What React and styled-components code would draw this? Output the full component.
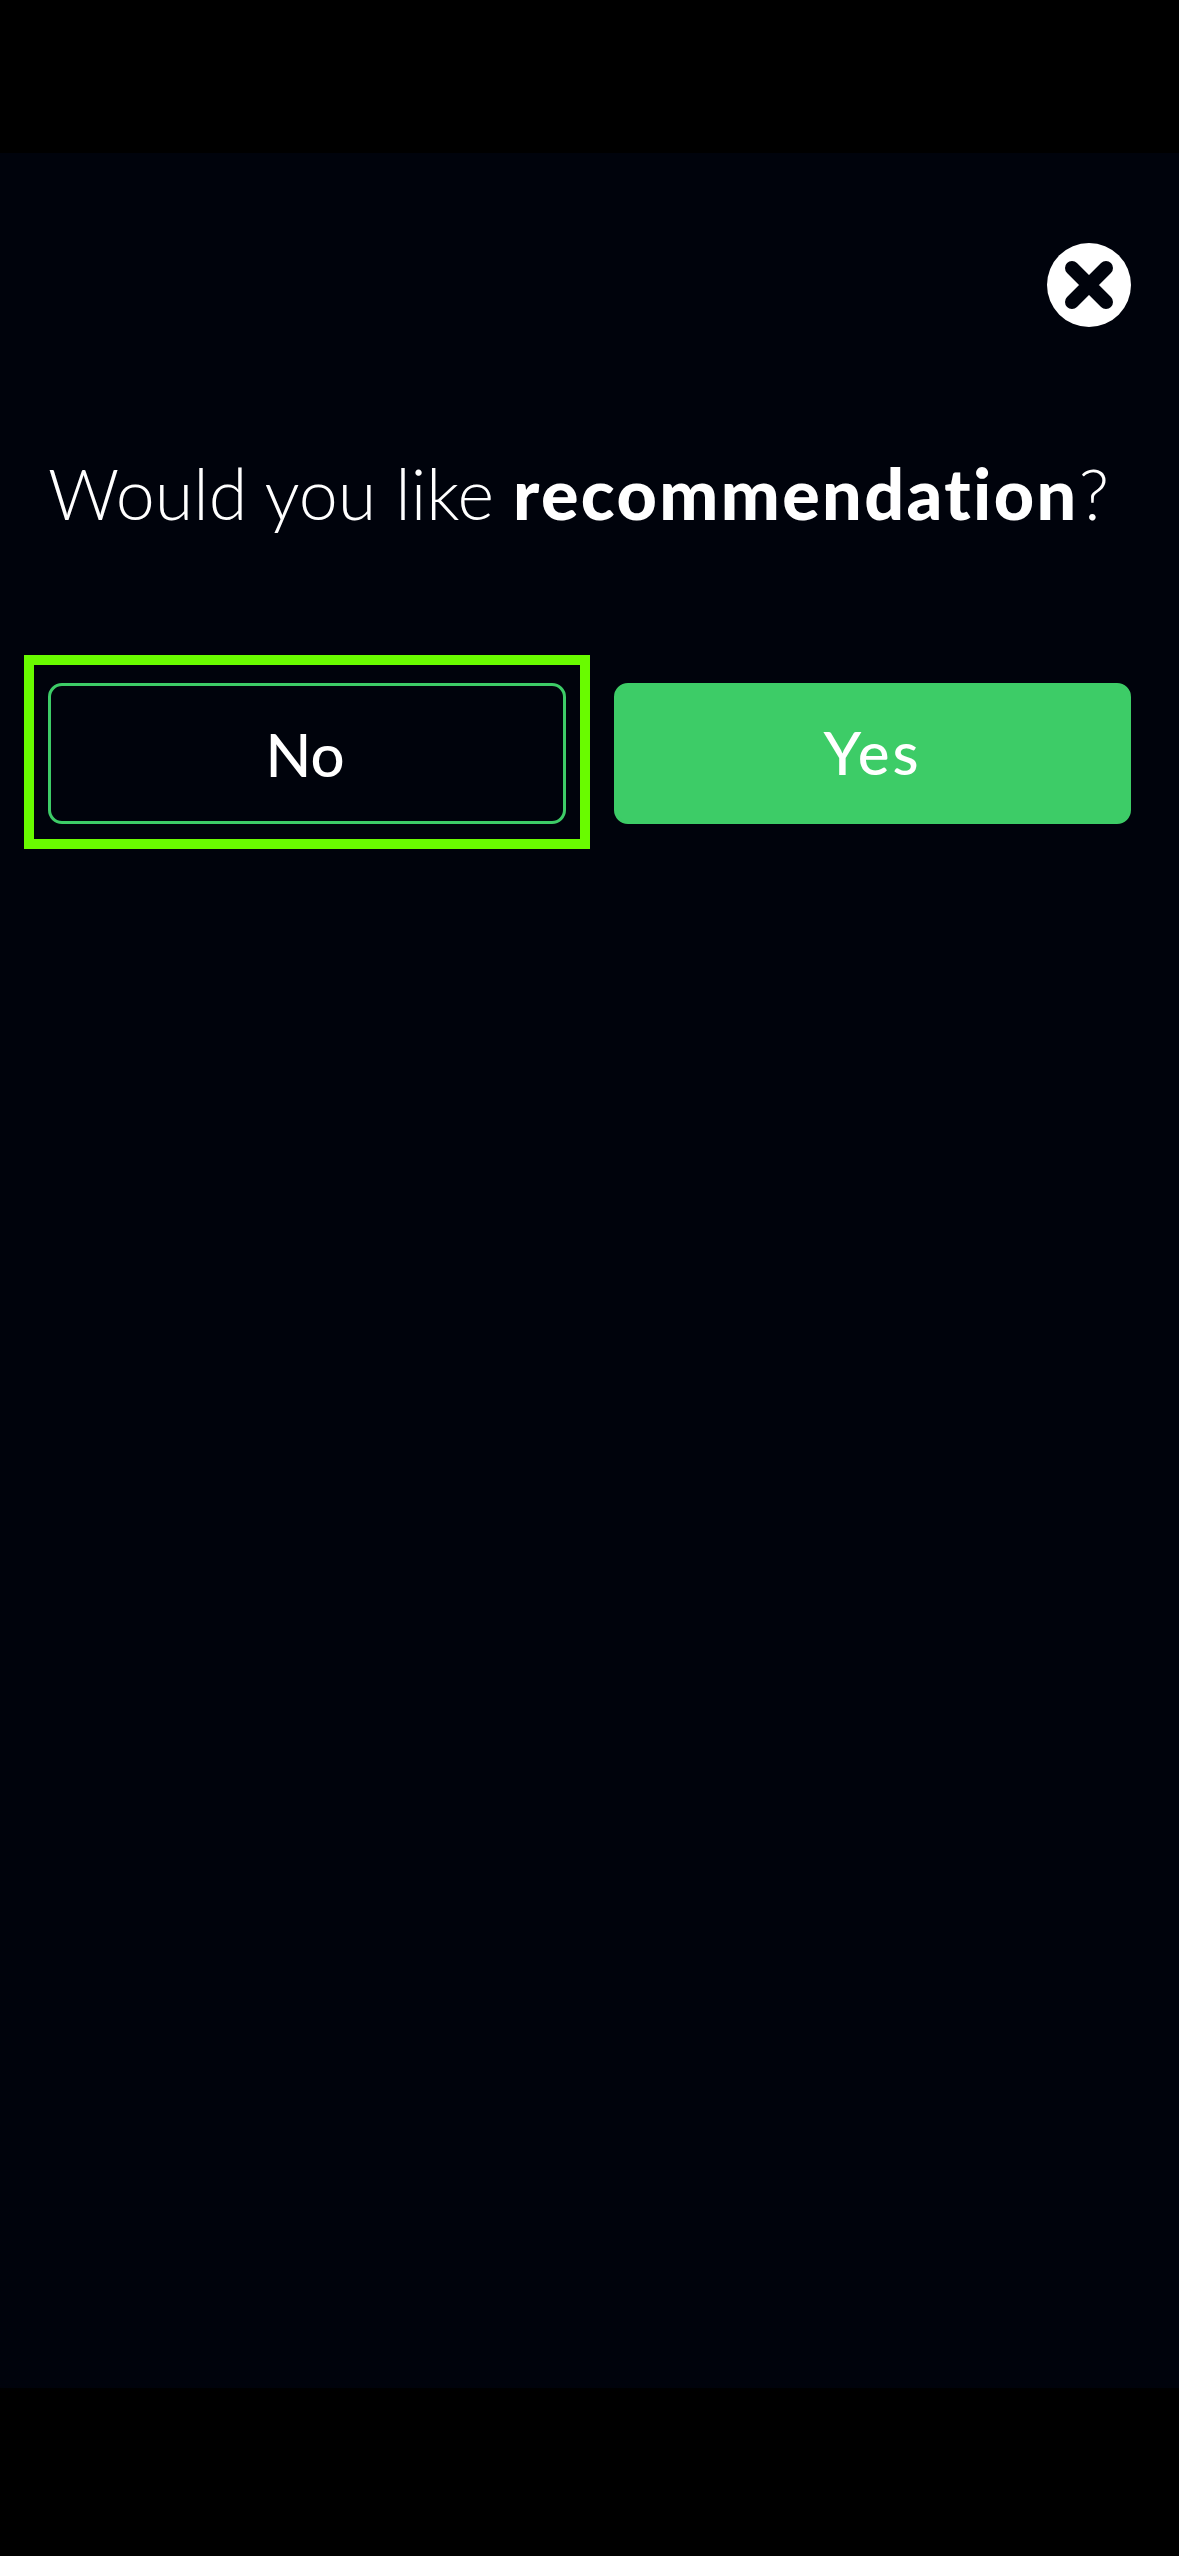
import React from "react"
import styled, { createGlobalStyle } from "styled-components"

const GlobalStyle = createGlobalStyle`
  html, body {
    margin: 0;
    padding: 0;
    background: #000;
  }
`

const Page = styled.div`
  width: 1179px;
  height: 2556px;
  display: flex;
  flex-direction: column;
  font-family: "Lato", "Liberation Sans", sans-serif;
  color: #fff;
  background: #000;
`

const Band = styled.div`
  flex: none;
  height: ${(p) => p.$height}px;
  background: #000;
`

const Sheet = styled.main`
  flex: 1;
  box-sizing: border-box;
  padding: 90px 48px 0;
  background: #00030c;
`

const CloseRow = styled.div`
  display: flex;
  justify-content: flex-end;
`

const CloseButton = styled.button`
  width: 84px;
  height: 84px;
  padding: 0;
  border: 0;
  background: none;
  display: block;
`

const Question = styled.h1`
  margin: 126px 0 0;
  height: 80px;
  font-size: 70px;
  line-height: 80px;
  font-weight: 300;
  white-space: nowrap;

  strong {
    font-weight: 900;
    letter-spacing: 2.4px;
  }
`

const Choices = styled.div`
  margin-top: 150px;
  display: grid;
  grid-template-columns: 518px 517px;
  gap: 48px;
`

const Choice = styled.button`
  position: relative;
  box-sizing: border-box;
  height: 141px;
  padding: ${(p) => (p.$primary ? "0 0 3px" : "1px 4px 0 0")};
  border: 3px solid #3dcc67;
  border-radius: 14px;
  background: ${(p) => (p.$primary ? "#3dcc67" : "transparent")};
  color: #fff;
  font-family: inherit;
  font-size: 60px;
  font-weight: 500;
  line-height: 1;
  letter-spacing: ${(p) => (p.$primary ? "3px" : "0")};

  ${(p) =>
    p.$focused &&
    `
    &::after {
      content: "";
      position: absolute;
      top: -31px;
      left: -27px;
      right: -27px;
      bottom: -28px;
      border: 10px solid #69fb00;
    }
  `}
`

export default function App() {
  return (
    <Page>
      <GlobalStyle />
      <Band $height={153} />
      <Sheet>
        <CloseRow>
          <CloseButton aria-label="Close">
            <svg width="84" height="84" viewBox="0 0 84 84">
              <circle cx="42" cy="42" r="42" fill="#fff" />
              <path
                d="M25 25 L59 59 M59 25 L25 59"
                stroke="#00030c"
                strokeWidth="14"
                strokeLinecap="round"
                fill="none"
              />
            </svg>
          </CloseButton>
        </CloseRow>
        <Question>
          Would you like <strong>recommendation</strong>?
        </Question>
        <Choices>
          <Choice $focused>No</Choice>
          <Choice $primary>Yes</Choice>
        </Choices>
      </Sheet>
      <Band $height={168} />
    </Page>
  )
}
